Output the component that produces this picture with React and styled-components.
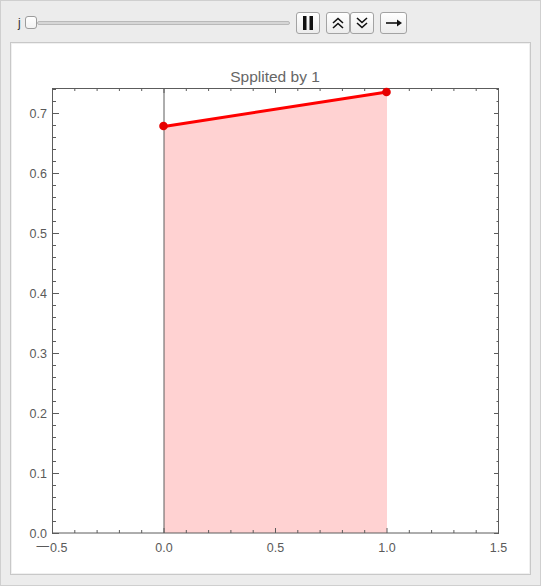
import styled, { createGlobalStyle } from "styled-components";

const GlobalStyle = createGlobalStyle`
    html, body {
        margin: 0;
        padding: 0;
        background: #ececec;
    }
`;

const Frame = styled.div`
    width: 541px;
    height: 586px;
    box-sizing: border-box;
    background: #ececec;
    border: 1px solid #cfcfcf;
    font-family: "Liberation Sans", Arial, sans-serif;
`;

const Toolbar = styled.div`
    height: 41px;
    box-sizing: border-box;
    padding: 2px 0 0 17px;
    display: flex;
    align-items: center;
`;

const VarLabel = styled.span`
    font-size: 12px;
    color: #333;
    width: 7px;
`;

const Slider = styled.div`
    width: 265px;
    height: 14px;
    display: flex;
    align-items: center;
`;

const Thumb = styled.div`
    width: 12px;
    height: 13px;
    box-sizing: border-box;
    border: 1px solid #9c9c9c;
    border-radius: 3px;
    background: linear-gradient(#ffffff, #f2f2f2);
    flex: none;
`;

const Track = styled.div`
    flex: 1;
    height: 4px;
    box-sizing: border-box;
    border: 1px solid #b9b9b9;
    border-radius: 2px;
    background: #d6d6d6;
`;

const Buttons = styled.div`
    display: flex;
    margin-left: ${(p) => p.$gap}px;
`;

const Button = styled.div`
    width: ${(p) => p.$w || 24}px;
    height: 22px;
    box-sizing: border-box;
    border: 1px solid #a3a3a3;
    border-radius: 3px;
    background: linear-gradient(#ffffff, #ececec);
    display: flex;
    align-items: center;
    justify-content: center;
`;

const Panel = styled.div`
    margin-left: 9px;
    width: 521px;
    height: 533px;
    box-sizing: border-box;
    background: #fff;
    border: 1px solid #c8c8c8;
    box-shadow: inset 0 0 0 1px #f0f0f0;
`;

const Chart = styled.svg`
    display: block;
    font-family: "Liberation Sans", Arial, sans-serif;
`;

const xp = (v) => 164 + 223 * v;
const yp = (v) => 533 - 600 * v;

const PauseIcon = () => (
    <svg width="12" height="14" viewBox="0 0 12 14">
        <rect x="1" y="0" width="3.5" height="14" fill="#111" />
        <rect x="7.5" y="0" width="3.5" height="14" fill="#111" />
    </svg>
);

const ChevronsIcon = ({ down }) => (
    <svg width="14" height="14" viewBox="0 0 14 14" style={down ? { transform: "scaleY(-1)" } : undefined}>
        <path d="M2 7 L7 2.5 L12 7 M2 12 L7 7.5 L12 12" fill="none" stroke="#111" strokeWidth="1.6" />
    </svg>
);

const ArrowIcon = () => (
    <svg width="18" height="10" viewBox="0 0 18 10">
        <path d="M1 5 H15" stroke="#111" strokeWidth="1.6" />
        <path d="M12 1.5 L17 5 L12 8.5 Z" fill="#111" />
    </svg>
);

const range = (from, to, step) => {
    const out = [];
    const n = Math.round((to - from) / step);
    for (let i = 0; i <= n; i++) out.push(+(from + i * step).toFixed(4));
    return out;
};

const isMult = (v, m) => Math.abs(v / m - Math.round(v / m)) < 1e-6;

function Plot() {
    const xTicks = range(-0.5, 1.5, 0.1);
    const yTicks = range(0, 0.74, 0.02);
    const stroke = "#5c5c5c";
    const label = "#5a5a5a";
    const p0 = { x: xp(0), y: yp(0.6775) };
    const p1 = { x: xp(1), y: yp(0.735) };

    return (
        <Chart width="519" height="531" viewBox="11 43 519 531">
            <polygon
                points={`${p0.x},${p0.y} ${p1.x},${p1.y} ${p1.x},533 ${p0.x},533`}
                fill="#ffd2d2"
            />
            <line x1={xp(0)} y1="88" x2={xp(0)} y2="533" stroke={stroke} strokeWidth="1" />
            <rect x="52.5" y="88.5" width="446" height="444.5" fill="none" stroke={stroke} strokeWidth="1" />

            {xTicks.map((v) => {
                const major = isMult(v, 0.5);
                const len = major ? 5 : 3;
                const x = xp(v);
                return (
                    <g key={"x" + v}>
                        <line x1={x} y1="533" x2={x} y2={533 - len} stroke={stroke} />
                        <line x1={x} y1="88" x2={x} y2={88 + len} stroke={stroke} />
                    </g>
                );
            })}
            {yTicks.map((v) => {
                const major = isMult(v, 0.1);
                const y = yp(v) + 0.5;
                return (
                    <g key={"y" + v}>
                        <line x1="52" y1={y} x2={52 + (major ? 7 : 4)} y2={y} stroke={stroke} />
                        <line x1="499" y1={y} x2={499 - (major ? 5 : 2.5)} y2={y} stroke={stroke} />
                    </g>
                );
            })}

            {range(0, 0.7, 0.1).map((v) => (
                <text key={"yl" + v} x="47" y={yp(v) + 4.5} fontSize="12.5" fill={label} textAnchor="end">
                    {v.toFixed(1)}
                </text>
            ))}
            <text x="49" y="550" fontSize="12.5" fill={label} textAnchor="end">—</text>
            <text x="50" y="552" fontSize="12.5" fill={label}>0.5</text>
            {[0, 0.5, 1, 1.5].map((v) => (
                <text key={"xl" + v} x={xp(v)} y="552" fontSize="12.5" fill={label} textAnchor="middle">
                    {v.toFixed(1)}
                </text>
            ))}

            <text x="275" y="82" fontSize="15.5" fill="#666" textAnchor="middle">Spplited by 1</text>

            <line x1={p0.x} y1={p0.y} x2={p1.x} y2={p1.y} stroke="#ff0000" strokeWidth="3" />
            <circle cx={p0.x - 0.5} cy={p0.y - 0.5} r="4.3" fill="#e60000" />
            <circle cx={p1.x - 0.5} cy={p1.y} r="4.3" fill="#e60000" />
        </Chart>
    );
}

export default function App() {
    return (
        <>
            <GlobalStyle />
            <Frame>
                <Toolbar>
                    <VarLabel>j</VarLabel>
                    <Slider>
                        <Thumb />
                        <Track />
                    </Slider>
                    <Buttons $gap={6}>
                        <Button>
                            <PauseIcon />
                        </Button>
                    </Buttons>
                    <Buttons $gap={6}>
                        <Button>
                            <ChevronsIcon />
                        </Button>
                        <Button>
                            <ChevronsIcon down />
                        </Button>
                    </Buttons>
                    <Buttons $gap={6}>
                        <Button $w={27}>
                            <ArrowIcon />
                        </Button>
                    </Buttons>
                </Toolbar>
                <Panel>
                    <Plot />
                </Panel>
            </Frame>
        </>
    );
}
